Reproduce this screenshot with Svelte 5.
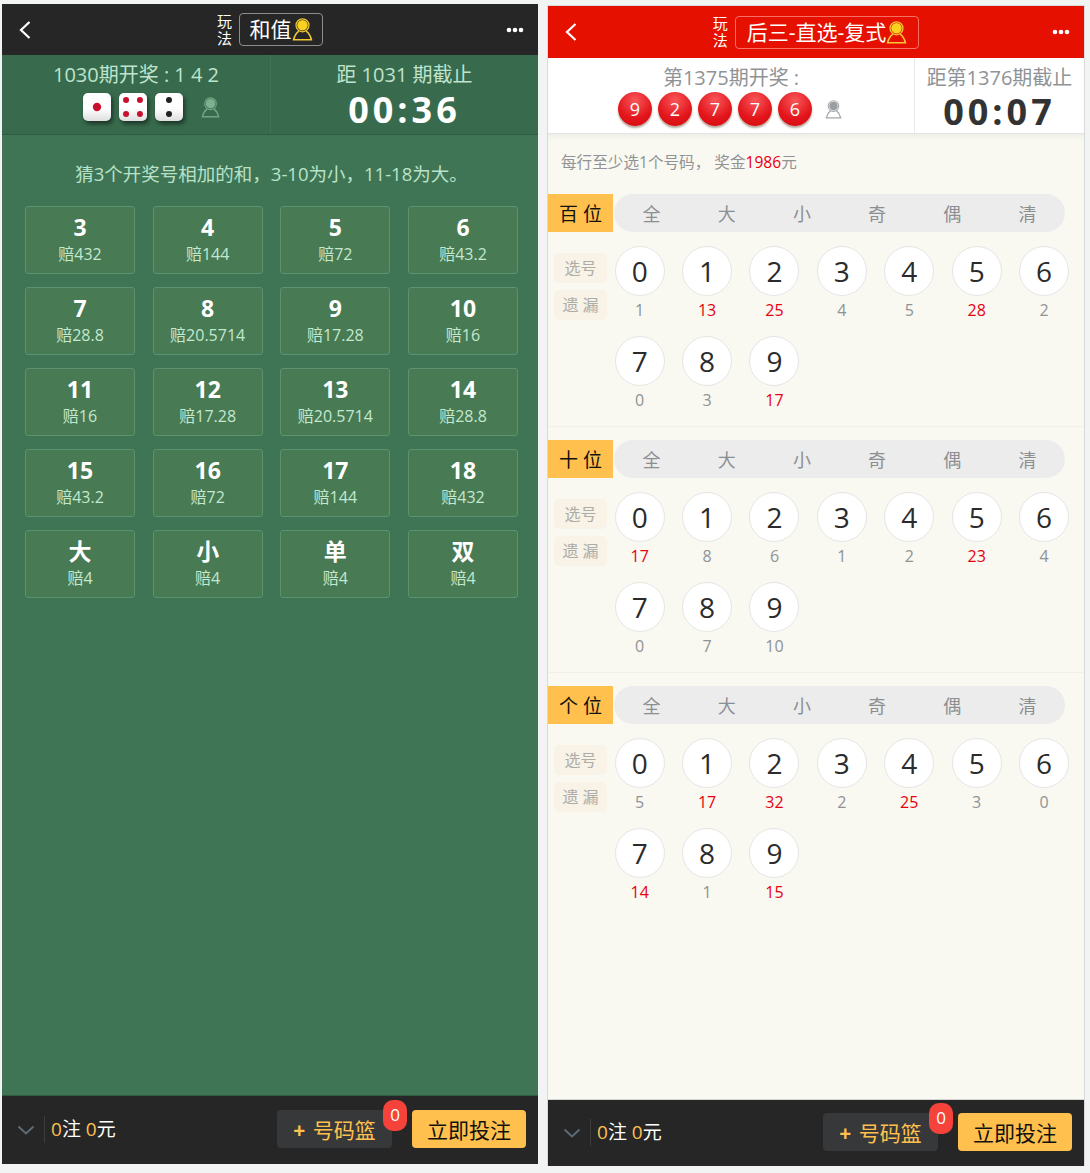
<script>
  const cards = [
    ['3', '赔432'], ['4', '赔144'], ['5', '赔72'], ['6', '赔43.2'],
    ['7', '赔28.8'], ['8', '赔20.5714'], ['9', '赔17.28'], ['10', '赔16'],
    ['11', '赔16'], ['12', '赔17.28'], ['13', '赔20.5714'], ['14', '赔28.8'],
    ['15', '赔43.2'], ['16', '赔72'], ['17', '赔144'], ['18', '赔432'],
    ['大', '赔4'], ['小', '赔4'], ['单', '赔4'], ['双', '赔4']
  ]
  const dice = [[[1, 1]], [[0, 0], [2, 0], [0, 2], [2, 2]], [[1, 0], [1, 2]]]
  const draw = [9, 2, 7, 7, 6]
  const quick = ['全', '大', '小', '奇', '偶', '清']
  const sections = [
    { name: '百 位', miss: [1, 13, 25, 4, 5, 28, 2, 0, 3, 17] },
    { name: '十 位', miss: [17, 8, 6, 1, 2, 23, 4, 0, 7, 10] },
    { name: '个 位', miss: [5, 17, 32, 2, 25, 3, 0, 14, 1, 15] }
  ]
</script>

{#snippet person(head, line, w, h)}
  <svg class="person" width={w} height={h} viewBox="0 0 20 22">
    <circle cx="10" cy="7" r="6.2" fill="none" stroke={line} stroke-width="1.2" />
    <circle cx="10" cy="7" r="5" fill={head} />
    <path d="M6.5 12.5 C4.5 14 2.5 16 1.5 20.8 H18.5 C17.5 16 15.5 14 13.5 12.5" fill="none" stroke={line} stroke-width="1.5" />
  </svg>
{/snippet}

{#snippet topbar(title)}
  <header class="topbar">
    <svg class="back" width="14" height="20" viewBox="0 0 14 20"><path d="M11.5 2 L3 10 L11.5 18" fill="none" stroke="#fff" stroke-width="2.2" /></svg>
    <div class="title">
      <span class="play">玩<br />法</span>
      <span class="titlebox">{title}{@render person('#f8d21f', '#f5c733', 21, 23)}</span>
    </div>
    <svg class="dots" width="18" height="6" viewBox="0 0 18 6"><circle cx="3" cy="3" r="2.3" fill="#fff" /><circle cx="9" cy="3" r="2.3" fill="#fff" /><circle cx="15" cy="3" r="2.3" fill="#fff" /></svg>
  </header>
{/snippet}

{#snippet footbar()}
  <footer class="footbar">
    <svg class="down" width="18" height="10" viewBox="0 0 18 10"><path d="M1.5 1.5 L9 8.5 L16.5 1.5" fill="none" stroke="#5f6d78" stroke-width="1.8" /></svg>
    <span class="total"><b>0</b>注 <b>0</b>元</span>
    <button class="basket">
      <span class="plus">+</span> 号码篮
      <span class="badge">0</span>
    </button>
    <button class="submit">立即投注</button>
  </footer>
{/snippet}

<div class="page">
  <section class="panel green">
    {@render topbar('和值')}
    <div class="info">
      <div class="col-a">
        <div class="info-title">1030期开奖 : 1 4 2</div>
        <div class="dice-row">
          {#each dice as pips}
            <svg class="die" width="28" height="28" viewBox="0 0 27 27">
              {#each pips as p}
                <circle cx={6.8 + p[0] * 6.7} cy={6.8 + p[1] * 6.7} r={pips.length === 1 ? 4 : 2.9} fill={pips.length === 2 ? '#222' : '#c8102e'} />
              {/each}
            </svg>
          {/each}
          {@render person('#7fb08f', '#6fa585', 19, 21)}
        </div>
      </div>
      <div class="col-b">
        <div class="info-title">距 1031 期截止</div>
        <div class="timer">00:36</div>
      </div>
    </div>
    <main class="board">
      <p class="rule">猜3个开奖号相加的和，3-10为小，11-18为大。</p>
      <div class="grid">
        {#each cards as c}
          <div class="card">
            <strong>{c[0]}</strong>
            <span>{c[1]}</span>
          </div>
        {/each}
      </div>
    </main>
    {@render footbar()}
  </section>

  <section class="panel red">
    {@render topbar('后三-直选-复式')}
    <div class="info">
      <div class="col-a">
        <div class="info-title">第1375期开奖 :</div>
        <div class="ball-row">
          {#each draw as n}<span class="redball">{n}</span>{/each}
          {@render person('#9a9da1', '#a3a6aa', 17, 19)}
        </div>
      </div>
      <div class="col-b">
        <div class="info-title">距第1376期截止</div>
        <div class="timer">00:07</div>
      </div>
    </div>
    <main class="picker">
      <p class="hint">每行至少选1个号码， 奖金<em>1986</em>元</p>
      {#each sections as s}
        <div class="digit">
          <div class="digit-head">
            <span class="digit-name">{s.name}</span>
            <div class="pill">
              {#each quick as q}<span>{q}</span>{/each}
            </div>
          </div>
          <div class="digit-body">
            <div class="tags">
              <span>选号</span>
              <span>遗 漏</span>
            </div>
            <div class="balls">
              {#each s.miss as m, i}
                <div class="cell">
                  <span class="ball">{i}</span>
                  <span class="miss" class:hot={m > 10}>{m}</span>
                </div>
              {/each}
            </div>
          </div>
        </div>
      {/each}
    </main>
    {@render footbar()}
  </section>
</div>

<style>
  :global(body) {
    background: #f2f3f3;
  }
  .page {
    display: flex;
    align-items: flex-start;
    gap: 10px;
    padding: 4px 0 0 2px;
    font-family: "Open Sans", "Noto Sans CJK SC", sans-serif;
  }
  .panel {
    width: 536px;
    height: 1160px;
    display: flex;
    flex-direction: column;
    flex: none;
  }
  .panel.red {
    margin-top: 2px;
    outline: 1px solid #d9dadb;
  }
  .topbar {
    height: 51px;
    flex: none;
    display: flex;
    align-items: center;
    justify-content: space-between;
    padding: 0 14px 0 16px;
    background: #262626;
    color: #fff;
  }
  .red .topbar {
    background: #e61000;
    height: 52px;
  }
  .title {
    display: flex;
    align-items: center;
    gap: 6px;
    margin-left: 2px;
  }
  .play {
    font-size: 15px;
    line-height: 17px;
    width: 16px;
  }
  .titlebox {
    display: flex;
    align-items: center;
    height: 31px;
    padding: 0 9.5px;
    border: 1px solid #8d8d8d;
    border-radius: 4px;
    font-size: 21px;
    line-height: 31px;
  }
  .red .titlebox {
    padding: 0 11px;
    border-color: #f77066;
  }
  .info {
    height: 79px;
    flex: none;
    display: flex;
    background: #386b4d;
    border-bottom: 1px solid #2f5c41;
    color: #bfe3cc;
  }
  .red .info {
    height: 75px;
    background: #fff;
    border-bottom-color: #e3e4e5;
    color: #8f9396;
  }
  .col-a {
    flex: 1;
    text-align: center;
  }
  .col-b {
    text-align: center;
    width: 267px;
    border-left: 1px solid #3f7354;
  }
  .red .col-b {
    width: 169px;
    border-left-color: #e8e9ea;
  }
  .info-title {
    font-size: 20px;
    line-height: 26px;
    margin-top: 7px;
  }
  .dice-row {
    display: flex;
    justify-content: center;
    align-items: center;
    gap: 8px;
    margin-top: 5px;
    padding-left: 31px;
  }
  .die {
    background: linear-gradient(#fff 55%, #dedede);
    border-radius: 5px;
    box-shadow: 2px 3px 4px rgba(0, 0, 0, 0.5);
  }
  .dice-row .person {
    margin-left: 10px;
  }
  .timer {
    font-size: 36px;
    font-weight: 700;
    line-height: 40px;
    letter-spacing: 4px;
    margin-top: 2px;
    color: #fff;
  }
  .red .timer {
    margin-top: 1px;
    color: #333;
  }
  .ball-row {
    display: flex;
    justify-content: center;
    align-items: center;
    gap: 6px;
    margin-top: 1px;
    padding-right: 2px;
  }
  .redball {
    width: 34px;
    height: 34px;
    border-radius: 50%;
    background: radial-gradient(circle at 50% 25%, #f8575a, #e2141a 60%, #cf0f13);
    box-shadow: 0 2px 2px #b5ac9c;
    color: #fff;
    font-size: 18px;
    line-height: 34px;
    text-align: center;
  }
  .ball-row .person {
    margin-left: 7px;
  }
  .board {
    flex: 1;
    background: #3f7555;
    padding: 0 20px 0 23px;
  }
  .rule {
    margin: 25px 0 18px;
    font-size: 18.5px;
    line-height: 28px;
    text-align: center;
    color: #b9e2c9;
  }
  .grid {
    display: grid;
    grid-template-columns: repeat(4, 110px);
    justify-content: space-between;
    row-gap: 13px;
  }
  .card {
    height: 68px;
    box-sizing: border-box;
    display: flex;
    flex-direction: column;
    align-items: center;
    background: #487a54;
    border: 1px solid #5b9272;
    border-radius: 3px;
    color: #c3e8cf;
    font-size: 16px;
  }
  .card strong {
    margin-top: 5px;
    font-size: 23px;
    line-height: 31px;
    color: #fff;
  }
  .card span {
    line-height: 22px;
  }
  .picker {
    flex: 1;
    background: #f9f8f1;
    box-shadow: inset 0 8px 8px -8px #e3e3e0;
  }
  .hint {
    margin: 0;
    padding: 17px 0 0 13px;
    height: 43px;
    font-size: 15.6px;
    line-height: 22px;
    color: #8f9396;
  }
  .hint em {
    font-style: normal;
    color: #e8000f;
  }
  .digit {
    height: 233px;
    margin-bottom: 13px;
    box-sizing: border-box;
    border-bottom: 1px solid #f1f0ea;
  }
  .digit:last-child {
    border-bottom: 0;
  }
  .digit-head {
    display: flex;
    gap: 1px;
    height: 38px;
  }
  .digit-name {
    width: 65px;
    background: #ffc04e;
    font-size: 19px;
    line-height: 40px;
    text-align: center;
    color: #111;
  }
  .pill {
    width: 451px;
    display: flex;
    background: #ececec;
    border-radius: 19px;
  }
  .pill span {
    flex: 1;
    text-align: center;
    font-size: 18px;
    line-height: 40px;
    color: #8c8f92;
  }
  .digit-body {
    display: flex;
    padding: 14px 0 0 6px;
  }
  .tags {
    width: 53px;
    flex: none;
    margin-right: 8px;
    display: flex;
    flex-direction: column;
    gap: 7px;
    padding-top: 7px;
  }
  .tags span {
    height: 30px;
    background: #f8f2e7;
    border-radius: 5px;
    text-align: center;
    font-size: 16px;
    line-height: 30px;
    color: #adadA8;
  }
  .balls {
    flex: 1;
    display: flex;
    flex-wrap: wrap;
    align-content: flex-start;
    margin-left: -9px;
  }
  .cell {
    width: 67.4px;
    height: 90px;
    display: flex;
    flex-direction: column;
    align-items: center;
  }
  .ball {
    width: 50px;
    height: 50px;
    box-sizing: border-box;
    border: 1px solid #e5e5e5;
    border-radius: 50%;
    background: #fff;
    font-size: 28px;
    line-height: 48px;
    text-align: center;
    color: #2b2b2b;
  }
  .miss {
    margin-top: 4px;
    font-size: 16px;
    line-height: 20px;
    color: #8f9396;
  }
  .miss.hot {
    color: #e8000f;
  }
  .footbar {
    height: 69px;
    flex: none;
    display: flex;
    align-items: center;
    background: #262626;
    border-top: 1px solid #2f5c41;
    box-sizing: border-box;
    padding: 0 12px 3px 15px;
    color: #fff;
  }
  .red .footbar {
    height: 67px;
    border-top-color: #d5d5d5;
  }
  .down {
    margin: 2px 9px 0 0;
  }
  .total {
    margin-top: 2px;
    padding-left: 6px;
    border-left: 1px solid #3d3d3d;
    font-size: 19px;
    line-height: 27px;
    flex: 1;
  }
  .total b {
    font-weight: 400;
    color: #ffc04e;
  }
  .basket {
    position: relative;
    width: 115px;
    height: 38px;
    padding: 0;
    border: 0;
    border-radius: 4px;
    background: #37383a;
    color: #ffc04e;
    font-family: inherit;
    font-size: 21px;
  }
  .plus {
    font-weight: 700;
    margin-right: 2px;
  }
  .badge {
    position: absolute;
    right: -15px;
    top: -10px;
    width: 24px;
    height: 31px;
    border-radius: 10px;
    background: #f5423a;
    color: #fff;
    font-size: 17px;
    line-height: 29px;
  }
  .submit {
    width: 114px;
    height: 38px;
    margin-left: 20px;
    padding: 0;
    border: 0;
    border-radius: 4px;
    background: #ffc04e;
    color: #111;
    font-family: inherit;
    font-size: 21px;
  }
</style>
